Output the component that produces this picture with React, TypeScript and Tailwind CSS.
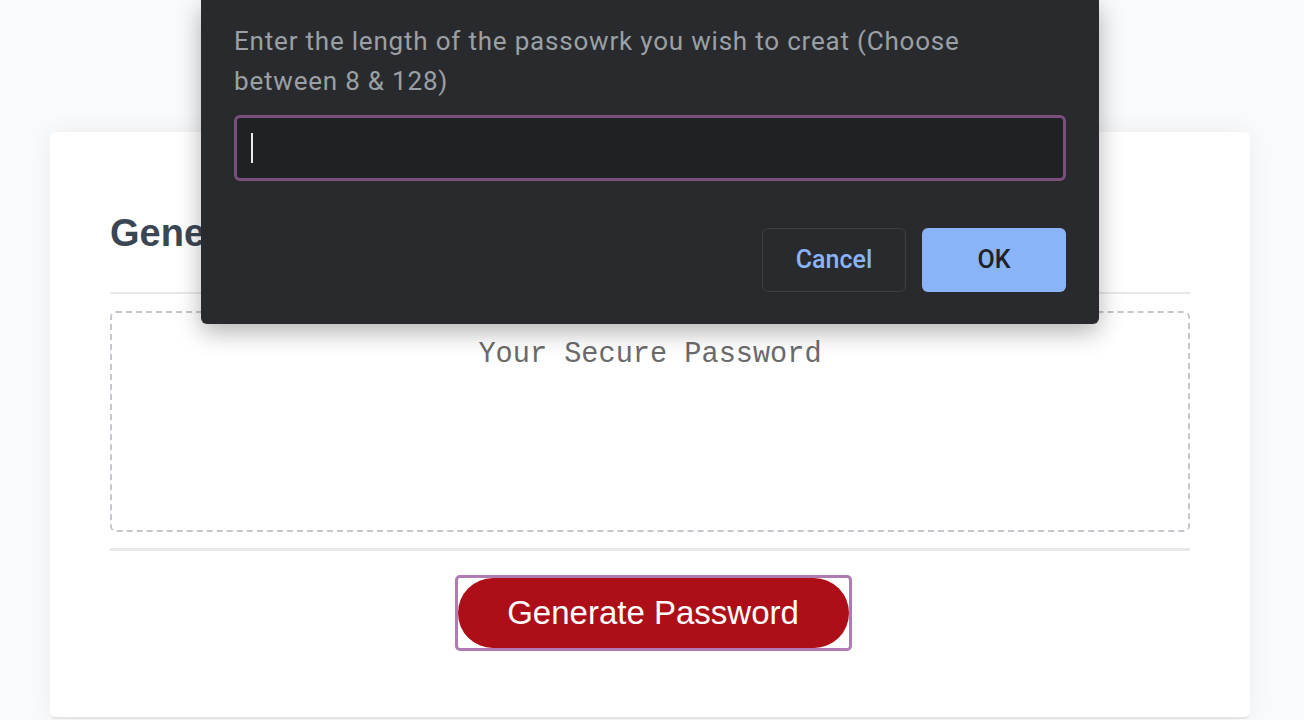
export default function App() {
  return (
    <div className="relative min-h-[720px] w-full overflow-hidden bg-[#f9fafb]">
      <div className="pt-[132px] pl-[50px]">
        <div className="w-[1200px] rounded-[6px] bg-white shadow-[0_0_24px_rgba(0,0,0,0.06)] border-b-2 border-[#e5e5e5] px-[60px] pt-[78px] pb-[66px]">
          <h2
            className="text-[38px] leading-[46px] font-bold text-[#3b4654] mb-[36px]"
            style={{ fontFamily: '"Liberation Sans", Arial, sans-serif' }}
          >
            Generate a Password
          </h2>
          <div className="h-[2px] bg-[#e8e8e8]" />
          <div className="mt-[17px] h-[221px] rounded-[6px] border-2 border-dashed border-[#c4c8ce] pt-[22px]">
            <p
              className="text-center text-[28.6px] leading-[40px] text-[#6b6b6b]"
              style={{ fontFamily: '"Liberation Mono", "Courier New", monospace' }}
            >
              Your Secure Password
            </p>
          </div>
          <div className="mt-[16px] h-[3px] bg-[#e8e8e8]" />
          <div className="mt-[24px] flex justify-center pl-[6px]">
            <div className="rounded-[5px] border-[3px] border-[#b07bb3] p-0">
              <button
                className="block h-[70px] w-[391px] rounded-full bg-[#ae0e17] text-[33px] text-white"
                style={{ fontFamily: '"Liberation Sans", Arial, sans-serif' }}
              >
                Generate Password
              </button>
            </div>
          </div>
        </div>
      </div>

      <div
        className="absolute left-[201px] top-0 w-[898px] h-[324px] rounded-b-[6px] bg-[#292a2d] shadow-[0_8px_24px_rgba(0,0,0,0.3)] px-[33px] pt-[21px] pb-[32px]"
        style={{ fontFamily: 'Roboto, "Noto Sans", sans-serif' }}
      >
        <p className="w-[760px] text-[26px] leading-[40px] tracking-[0.8px] text-[#9aa0a6]">
          Enter the length of the passowrk you wish to creat (Choose between 8 &amp; 128)
        </p>
        <div className="mt-[14px] h-[66px] rounded-[6px] border-[3px] border-[#7a4f7e] bg-[#202124] flex items-center pl-[14px]">
          <div className="w-[2px] h-[30px] bg-[#e8eaed]" />
        </div>
        <div className="mt-[47px] flex justify-end gap-[16px]">
          <button className="h-[64px] w-[144px] rounded-[6px] border border-[#3c4043] text-[25px] font-medium text-[#8ab4f8]">
            Cancel
          </button>
          <button className="h-[64px] w-[144px] rounded-[6px] bg-[#8ab4f8] text-[25px] font-medium text-[#202124]">
            OK
          </button>
        </div>
      </div>
    </div>
  );
}
